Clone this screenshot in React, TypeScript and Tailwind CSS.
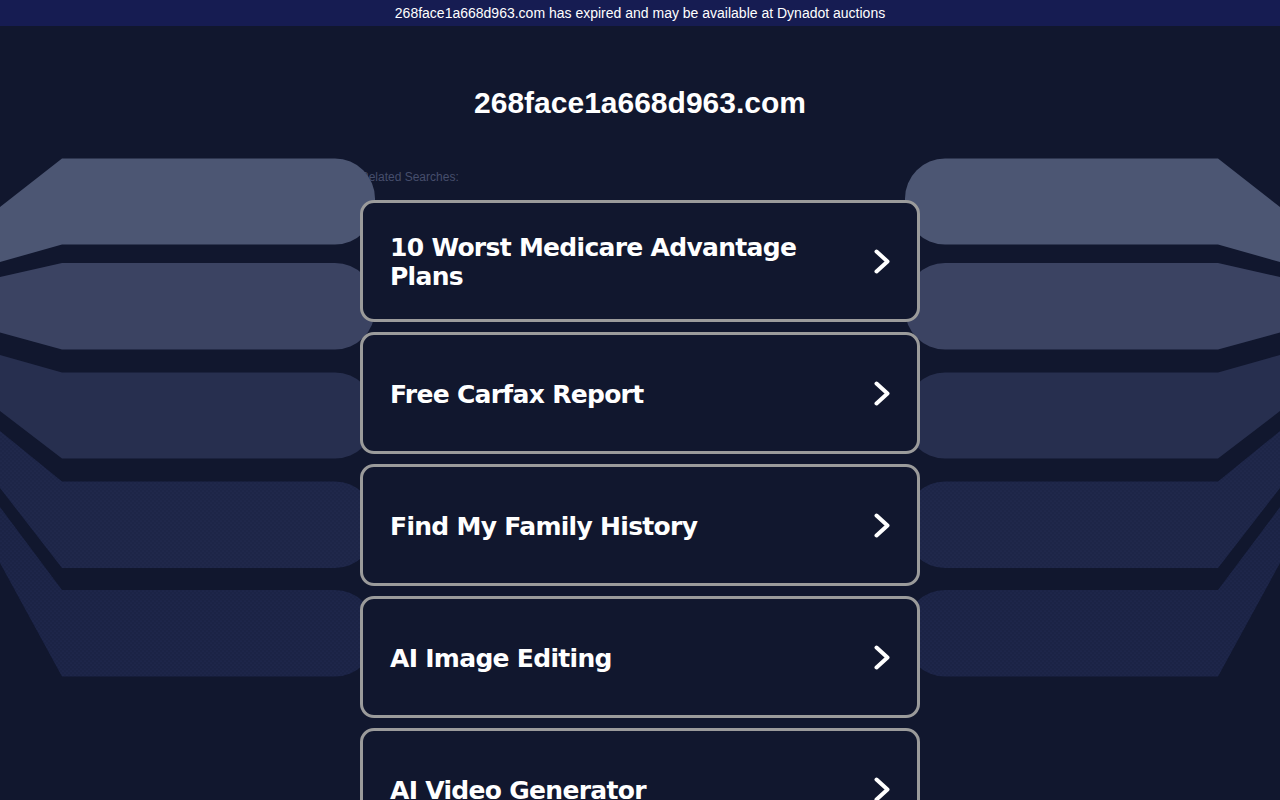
import React from "react";

const searches = [
  "10 Worst Medicare Advantage Plans",
  "Free Carfax Report",
  "Find My Family History",
  "AI Image Editing",
  "AI Video Generator",
];

// left-side band outlines: y at x=0 and at x=62 (top and bottom)
const bands = [
  { top0: 207, top: 158.5, bot: 244.5, bot0: 262, fill: "#4c5673", dots: false },
  { top0: 277, top: 263, bot: 349.5, bot0: 332.5, fill: "#3b4362", dots: false },
  { top0: 355, top: 372.5, bot: 458.5, bot0: 411, fill: "#272f4f", dots: false },
  { top0: 431, top: 481.5, bot: 568, bot0: 488, fill: "#1d2547", dots: true },
  { top0: 507, top: 590, bot: 676.5, bot0: 563, fill: "#1b2345", dots: true },
];

function bandPath(b: (typeof bands)[number]) {
  const end = 375;
  const r = 40;
  return `M0 ${b.top0} L62 ${b.top} L${end - r} ${b.top} A${r} ${r} 0 0 1 ${end} ${b.top + r} L${end} ${b.bot - r} A${r} ${r} 0 0 1 ${end - r} ${b.bot} L62 ${b.bot} L0 ${b.bot0} Z`;
}

function Bands() {
  return (
    <svg
      className="pointer-events-none absolute left-0 top-0"
      width="1280"
      height="800"
      viewBox="0 0 1280 800"
    >
      <defs>
        <pattern id="dots" width="4" height="4" patternUnits="userSpaceOnUse">
          <circle cx="1" cy="1" r="0.6" fill="#2b3560" />
          <circle cx="3" cy="3" r="0.6" fill="#2b3560" />
        </pattern>
      </defs>
      {[false, true].map((mirror) => (
        <g key={String(mirror)} transform={mirror ? "translate(1280 0) scale(-1 1)" : undefined}>
          {bands.map((b, i) => (
            <g key={i}>
              <path d={bandPath(b)} fill={b.fill} />
              {b.dots ? <path d={bandPath(b)} fill="url(#dots)" opacity="0.6" /> : null}
            </g>
          ))}
        </g>
      ))}
    </svg>
  );
}

function Chevron() {
  return (
    <svg width="16" height="25" viewBox="0 0 16 25" className="shrink-0">
      <path
        d="M2.5 2.5 L13.5 12.5 L2.5 22.5"
        fill="none"
        stroke="#ffffff"
        strokeWidth="4"
        strokeLinecap="round"
        strokeLinejoin="round"
      />
    </svg>
  );
}

export default function App() {
  return (
    <div className="relative h-[800px] overflow-hidden bg-[#11172e] font-['Liberation_Sans',Arial,sans-serif]">
      <div className="flex h-[26px] items-center justify-center bg-[#161c52] text-[14px] text-white">
        268face1a668d963.com has expired and may be available at Dynadot auctions
      </div>

      <div className="mx-auto w-[560px]">
        <h1 className="mt-[60px] text-center text-[30px] font-bold leading-[34px] text-white">
          268face1a668d963.com
        </h1>
        <p className="mt-[50px] text-[12px] leading-[14px] text-[#464e6c]">Related Searches:</p>
      </div>

      <Bands />

      <div className="relative z-10 mx-auto mt-[16px] flex w-[560px] flex-col gap-[10px]">
        {searches.map((s) => (
          <a
            key={s}
            href="#"
            className="flex h-[122px] items-center justify-between rounded-[14px] border-[3px] border-[#9b9b9b] bg-[#11172e] px-[27px]"
          >
            <span className="max-w-[460px] pt-[2px] font-['DejaVu_Sans',Verdana,sans-serif] text-[25px] font-bold leading-[29px] tracking-[-0.7px] text-white">
              {s}
            </span>
            <Chevron />
          </a>
        ))}
      </div>
    </div>
  );
}
